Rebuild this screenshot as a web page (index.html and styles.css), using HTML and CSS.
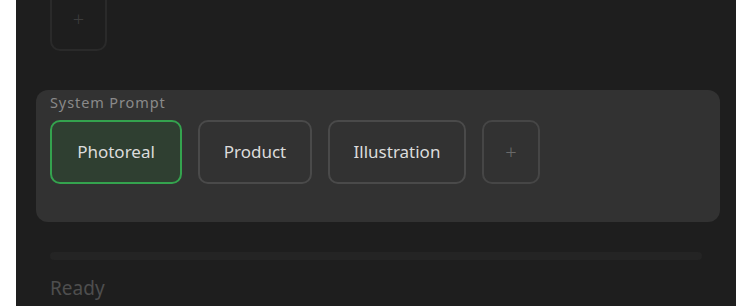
FILE: index.html
```html
<!DOCTYPE html>
<html lang="en">
<head>
    <meta charset="UTF-8">
    <title>Prompt presets</title>
    <link rel="stylesheet" href="styles.css">
</head>
<body>
<div class="panel">
    <!-- 上一组的添加按钮 -->
    <div class="top-row">
        <button class="add add-dim">+</button>
    </div>

    <!-- 系统提示词 -->
    <div class="card">
        <div class="label">System Prompt</div>
        <div class="chips">
            <button class="chip active">Photoreal</button>
            <button class="chip">Product</button>
            <button class="chip">Illustration</button>
            <button class="add">+</button>
        </div>
    </div>

    <div class="divider"></div>
    <div class="status">Ready</div>
</div>
</body>
</html>
```

FILE: styles.css
```css
* {
    margin: 0;
    padding: 0;
    box-sizing: border-box;
}

body {
    background: #fff;
    font-family: "Noto Sans", "Open Sans", sans-serif;
}

.panel {
    width: 720px;
    height: 306px;
    margin-left: 16px;
    background: #1e1e1e;
    overflow: hidden;
}

.top-row {
    padding-left: 34px;
    margin-top: -13px;
}

button {
    font-family: inherit;
    cursor: pointer;
}

.add {
    width: 58px;
    height: 64px;
    border: 2px solid #464646;
    border-radius: 10px;
    background: transparent;
    color: #6a6a6a;
    font-size: 20px;
    font-weight: 300;
    padding-bottom: 2px;
}

.add-dim {
    width: 57px;
    border-color: #2a2a2a;
    color: #3c3c3c;
}

.card {
    margin: 39px 16px 0 20px;
    padding: 1px 14px 38px;
    background: #323232;
    border-radius: 12px;
}

.label {
    font-size: 14.5px;
    line-height: 22px;
    letter-spacing: 0.9px;
    color: #8a8a8a;
    margin-bottom: 7px;
}

.chips {
    display: flex;
    gap: 16px;
}

.chip {
    height: 64px;
    padding: 0 20px 2px;
    border: 2px solid #4a4a4a;
    border-radius: 10px;
    background: transparent;
    color: #dcdcdc;
    font-size: 17px;
}

.chip:nth-child(1) { width: 132px; }
.chip:nth-child(2) { width: 114px; }
.chip:nth-child(3) { width: 138px; }

.chip.active {
    border-color: #34a34e;
    background: #2f3f31;
}

.divider {
    height: 8px;
    margin: 30px 34px 0 34px;
    border-radius: 4px;
    background: #242424;
}

.status {
    margin: 16px 0 0 34px;
    font-size: 19px;
    line-height: 24px;
    color: #4e4e4e;
}
```
